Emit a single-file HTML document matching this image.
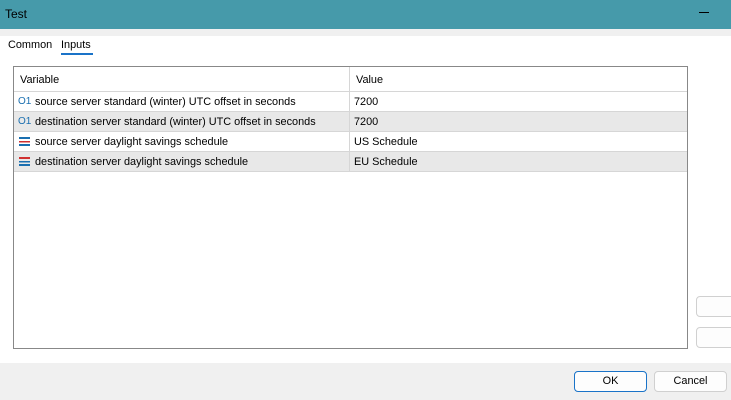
<!DOCTYPE html><html><head><style>
body{margin:0;width:731px;height:400px;position:relative;overflow:hidden;background:#f0f0f0;font-family:"Liberation Sans",sans-serif;font-size:10.9px;color:#000}
.a{position:absolute}
.row{position:absolute;left:1px;width:673px;height:19px;border-bottom:1px solid #d6d6d6}
.row span{position:absolute;top:4px}
.v{left:337px;border-left:1px solid #d6d6d6;height:20px;top:-1px;padding-left:4px;line-height:22px}
.v span{position:static}
.btn{position:absolute;background:#fdfdfd;border:1px solid #d0d0d0;border-radius:4px;text-align:center;line-height:19px;box-sizing:border-box}
</style></head><body>
<div class="a" style="left:0;top:0;width:731px;height:29px;background:#469aaa"></div>
<div class="a" style="left:5px;top:7px;font-size:12px">Test</div>
<div class="a" style="left:699px;top:12px;width:10px;height:1px;background:#000"></div>
<div class="a" style="left:0;top:36px;width:731px;height:327px;background:#fff"></div>
<div class="a" style="left:8px;top:39px">Common</div>
<div class="a" style="left:61px;top:39px">Inputs</div>
<div class="a" style="left:61px;top:53px;width:32px;height:2px;background:#1a73c8"></div>
<div class="a" style="left:13px;top:66px;width:673px;height:281px;border:1px solid #888;background:#fff">
<div class="row" style="top:0;height:24px;border-bottom:1px solid #d6d6d6;left:0;width:673px"><span style="left:6px;top:7px">Variable</span><div class="a" style="left:335px;top:0;height:24px;border-left:1px solid #d6d6d6;padding-left:6px;line-height:27px">Value</div></div>
<div class="row" style="top:25px;left:0"><span style="left:4px;color:#1a6fb0;font-size:10px;top:4px">O1</span><span style="left:21px">source server standard (winter) UTC offset in seconds</span><div class="a v" style="left:335px">7200</div></div>
<div class="row" style="top:45px;left:0;background:#e8e8e8"><span style="left:4px;color:#1a6fb0;font-size:10px;top:4px">O1</span><span style="left:21px">destination server standard (winter) UTC offset in seconds</span><div class="a v" style="left:335px">7200</div></div>
<div class="row" style="top:65px;left:0"><svg class="a" style="left:5px;top:4px" width="11" height="11"><rect y="1" width="11" height="2" fill="#1a6fb0"/><rect y="5" width="11" height="1.5" fill="#d03030"/><rect y="8" width="11" height="2" fill="#1a6fb0"/></svg><span style="left:21px">source server daylight savings schedule</span><div class="a v" style="left:335px">US Schedule</div></div>
<div class="row" style="top:85px;left:0;background:#e8e8e8"><svg class="a" style="left:5px;top:4px" width="11" height="11"><rect y="1" width="11" height="2" fill="#d03030"/><rect y="5" width="11" height="1.5" fill="#1a6fb0"/><rect y="8" width="11" height="2" fill="#1a6fb0"/></svg><span style="left:21px">destination server daylight savings schedule</span><div class="a v" style="left:335px">EU Schedule</div></div>
</div>
<div class="btn" style="left:696px;top:296px;width:40px;height:21px"></div>
<div class="btn" style="left:696px;top:327px;width:40px;height:21px"></div>
<div class="btn" style="left:574px;top:371px;width:73px;height:21px;border-color:#1a73c8">OK</div>
<div class="btn" style="left:654px;top:371px;width:73px;height:21px">Cancel</div>
</body></html>
